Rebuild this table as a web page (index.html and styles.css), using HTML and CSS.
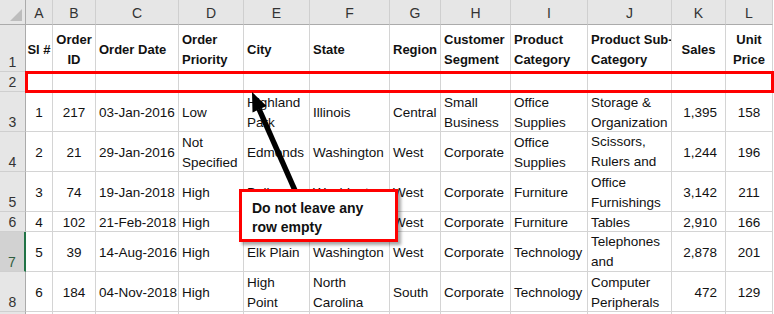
FILE: index.html
```html
<!DOCTYPE html>
<html lang="en">
<head>
    <meta charset="UTF-8">
    <meta name="viewport" content="width=device-width, initial-scale=1.0">
    <title>Orders sheet</title>
    <link rel="stylesheet" href="styles.css">
</head>
<body>
    <div class="wrap">
        <div class="sheet">
            <!-- column letters -->
            <div class="corner"><span class="tri"></span></div>
            <div class="ch">A</div>
            <div class="ch">B</div>
            <div class="ch">C</div>
            <div class="ch">D</div>
            <div class="ch">E</div>
            <div class="ch">F</div>
            <div class="ch">G</div>
            <div class="ch">H</div>
            <div class="ch">I</div>
            <div class="ch">J</div>
            <div class="ch">K</div>
            <div class="ch">L</div>

            <!-- row 1: field names -->
            <div class="rh">1</div>
            <div class="cell head c">Sl #</div>
            <div class="cell head c">Order<br>ID</div>
            <div class="cell head">Order Date</div>
            <div class="cell head">Order<br>Priority</div>
            <div class="cell head">City</div>
            <div class="cell head">State</div>
            <div class="cell head">Region</div>
            <div class="cell head">Customer<br>Segment</div>
            <div class="cell head">Product<br>Category</div>
            <div class="cell head">Product Sub-<br>Category</div>
            <div class="cell head c">Sales</div>
            <div class="cell head c">Unit<br>Price</div>

            <!-- row 2: left blank -->
            <div class="rh mid">2</div>
            <div class="cell"></div>
            <div class="cell"></div>
            <div class="cell"></div>
            <div class="cell"></div>
            <div class="cell"></div>
            <div class="cell"></div>
            <div class="cell"></div>
            <div class="cell"></div>
            <div class="cell"></div>
            <div class="cell"></div>
            <div class="cell"></div>
            <div class="cell"></div>

            <div class="rh">3</div>
            <div class="cell c">1</div>
            <div class="cell c">217</div>
            <div class="cell">03-Jan-2016</div>
            <div class="cell">Low</div>
            <div class="cell">Highland<br>Park</div>
            <div class="cell">Illinois</div>
            <div class="cell">Central</div>
            <div class="cell">Small<br>Business</div>
            <div class="cell">Office<br>Supplies</div>
            <div class="cell">Storage &amp;<br>Organization</div>
            <div class="cell r">1,395</div>
            <div class="cell c">158</div>

            <div class="rh">4</div>
            <div class="cell c">2</div>
            <div class="cell c">21</div>
            <div class="cell">29-Jan-2016</div>
            <div class="cell">Not<br>Specified</div>
            <div class="cell">Edmonds</div>
            <div class="cell">Washington</div>
            <div class="cell">West</div>
            <div class="cell">Corporate</div>
            <div class="cell">Office<br>Supplies</div>
            <div class="cell top">Scissors,<br>Rulers and<br>Trimmers</div>
            <div class="cell r">1,244</div>
            <div class="cell c">196</div>

            <div class="rh">5</div>
            <div class="cell c">3</div>
            <div class="cell c">74</div>
            <div class="cell">19-Jan-2018</div>
            <div class="cell">High</div>
            <div class="cell">Bellevue</div>
            <div class="cell">Washington</div>
            <div class="cell">West</div>
            <div class="cell">Corporate</div>
            <div class="cell">Furniture</div>
            <div class="cell">Office<br>Furnishings</div>
            <div class="cell r">3,142</div>
            <div class="cell c">211</div>

            <div class="rh">6</div>
            <div class="cell c">4</div>
            <div class="cell c">102</div>
            <div class="cell">21-Feb-2018</div>
            <div class="cell">High</div>
            <div class="cell">Renton</div>
            <div class="cell">Washington</div>
            <div class="cell">West</div>
            <div class="cell">Corporate</div>
            <div class="cell">Furniture</div>
            <div class="cell">Tables</div>
            <div class="cell r">2,910</div>
            <div class="cell c">166</div>

            <div class="rh sel">7</div>
            <div class="cell c">5</div>
            <div class="cell c">39</div>
            <div class="cell">14-Aug-2016</div>
            <div class="cell">High</div>
            <div class="cell">Elk Plain</div>
            <div class="cell">Washington</div>
            <div class="cell">West</div>
            <div class="cell">Corporate</div>
            <div class="cell">Technology</div>
            <div class="cell top">Telephones<br>and<br>Communication</div>
            <div class="cell r">2,878</div>
            <div class="cell c">201</div>

            <div class="rh">8</div>
            <div class="cell c">6</div>
            <div class="cell c">184</div>
            <div class="cell">04-Nov-2018</div>
            <div class="cell">High</div>
            <div class="cell">High<br>Point</div>
            <div class="cell">North<br>Carolina</div>
            <div class="cell">South</div>
            <div class="cell">Corporate</div>
            <div class="cell">Technology</div>
            <div class="cell">Computer<br>Peripherals</div>
            <div class="cell r">472</div>
            <div class="cell c">129</div>

            <div class="rh">9</div>
            <div class="cell"></div>
            <div class="cell"></div>
            <div class="cell"></div>
            <div class="cell"></div>
            <div class="cell"></div>
            <div class="cell"></div>
            <div class="cell"></div>
            <div class="cell"></div>
            <div class="cell"></div>
            <div class="cell"></div>
            <div class="cell"></div>
            <div class="cell"></div>
        </div>

        <!-- annotation layer -->
        <div class="mark-row"></div>
        <svg class="arrow" width="774" height="314" viewBox="0 0 774 314">
            <line x1="297" y1="195" x2="259" y2="109" stroke="#000" stroke-width="5.5"/>
            <polygon points="252,92 266.5,106 252.5,112.5" fill="#000"/>
        </svg>
        <div class="callout">Do not leave any<br>row empty</div>
    </div>
</body>
</html>
```

FILE: styles.css
```css
* {
    margin: 0;
    padding: 0;
    box-sizing: border-box;
}

body {
    font-family: "Liberation Sans", Arial, sans-serif;
    font-size: 13.5px;
    color: #111;
    background: #fff;
    overflow: hidden;
}

.wrap {
    position: relative;
    width: 774px;
    height: 314px;
    overflow: hidden;
}

.sheet {
    display: grid;
    grid-template-columns: 26px 27px 43px 83px 65px 66px 80px 51px 70px 77px 84px 54px 47px;
    grid-template-rows: 25px 47px 20px 40px 40px 40px 20px 40px 40px 20px;
}

/* headers */
.corner {
    position: relative;
    background: #e6e6e6;
    border-right: 1px solid #ababab;
    border-bottom: 1px solid #ababab;
}

.tri {
    position: absolute;
    right: 3px;
    bottom: 3px;
    width: 0;
    height: 0;
    border-left: 12px solid transparent;
    border-bottom: 12px solid #bdbdbd;
}

.ch {
    display: flex;
    align-items: center;
    justify-content: center;
    padding-top: 2px;
    background: #e6e6e6;
    color: #333;
    font-size: 14px;
    border-right: 1px solid #cfcfcf;
    border-bottom: 1px solid #ababab;
}

.rh {
    display: flex;
    align-items: flex-end;
    justify-content: center;
    padding-bottom: 1px;
    background: #e6e6e6;
    color: #333;
    font-size: 14px;
    border-right: 1px solid #ababab;
    border-bottom: 1px solid #cfcfcf;
}

.rh.mid {
    align-items: center;
    padding-bottom: 0;
}

.rh.sel {
    background: #d2d2d2;
    color: #2f5d3f;
    border-right: 2px solid #217346;
}

/* grid cells */
.cell {
    display: flex;
    align-items: center;
    padding: 3px 3px 0;
    line-height: 20px;
    white-space: nowrap;
    overflow: hidden;
    border-right: 1px solid #d4d4d4;
    border-bottom: 1px solid #d4d4d4;
}

.cell.head {
    font-weight: bold;
    font-size: 13px;
}

.cell.c {
    justify-content: center;
    text-align: center;
    padding-left: 1px;
    padding-right: 1px;
}

.cell.r {
    justify-content: flex-end;
    padding-right: 8px;
}

.cell.top {
    align-items: flex-start;
    padding-top: 0;
}

/* annotation */
.mark-row {
    position: absolute;
    left: 25px;
    top: 71px;
    width: 749px;
    height: 22px;
    border: 3px solid #ff0000;
}

.arrow {
    position: absolute;
    left: 0;
    top: 0;
}

.callout {
    position: absolute;
    left: 239px;
    top: 189px;
    width: 159px;
    height: 53px;
    padding: 7px 0 0 10px;
    background: #fff;
    border: 3px solid #ff0000;
    box-shadow: 3px 3px 3px rgba(0, 0, 0, 0.35);
    font-weight: bold;
    font-size: 14px;
    line-height: 19px;
    color: #111;
}
```
